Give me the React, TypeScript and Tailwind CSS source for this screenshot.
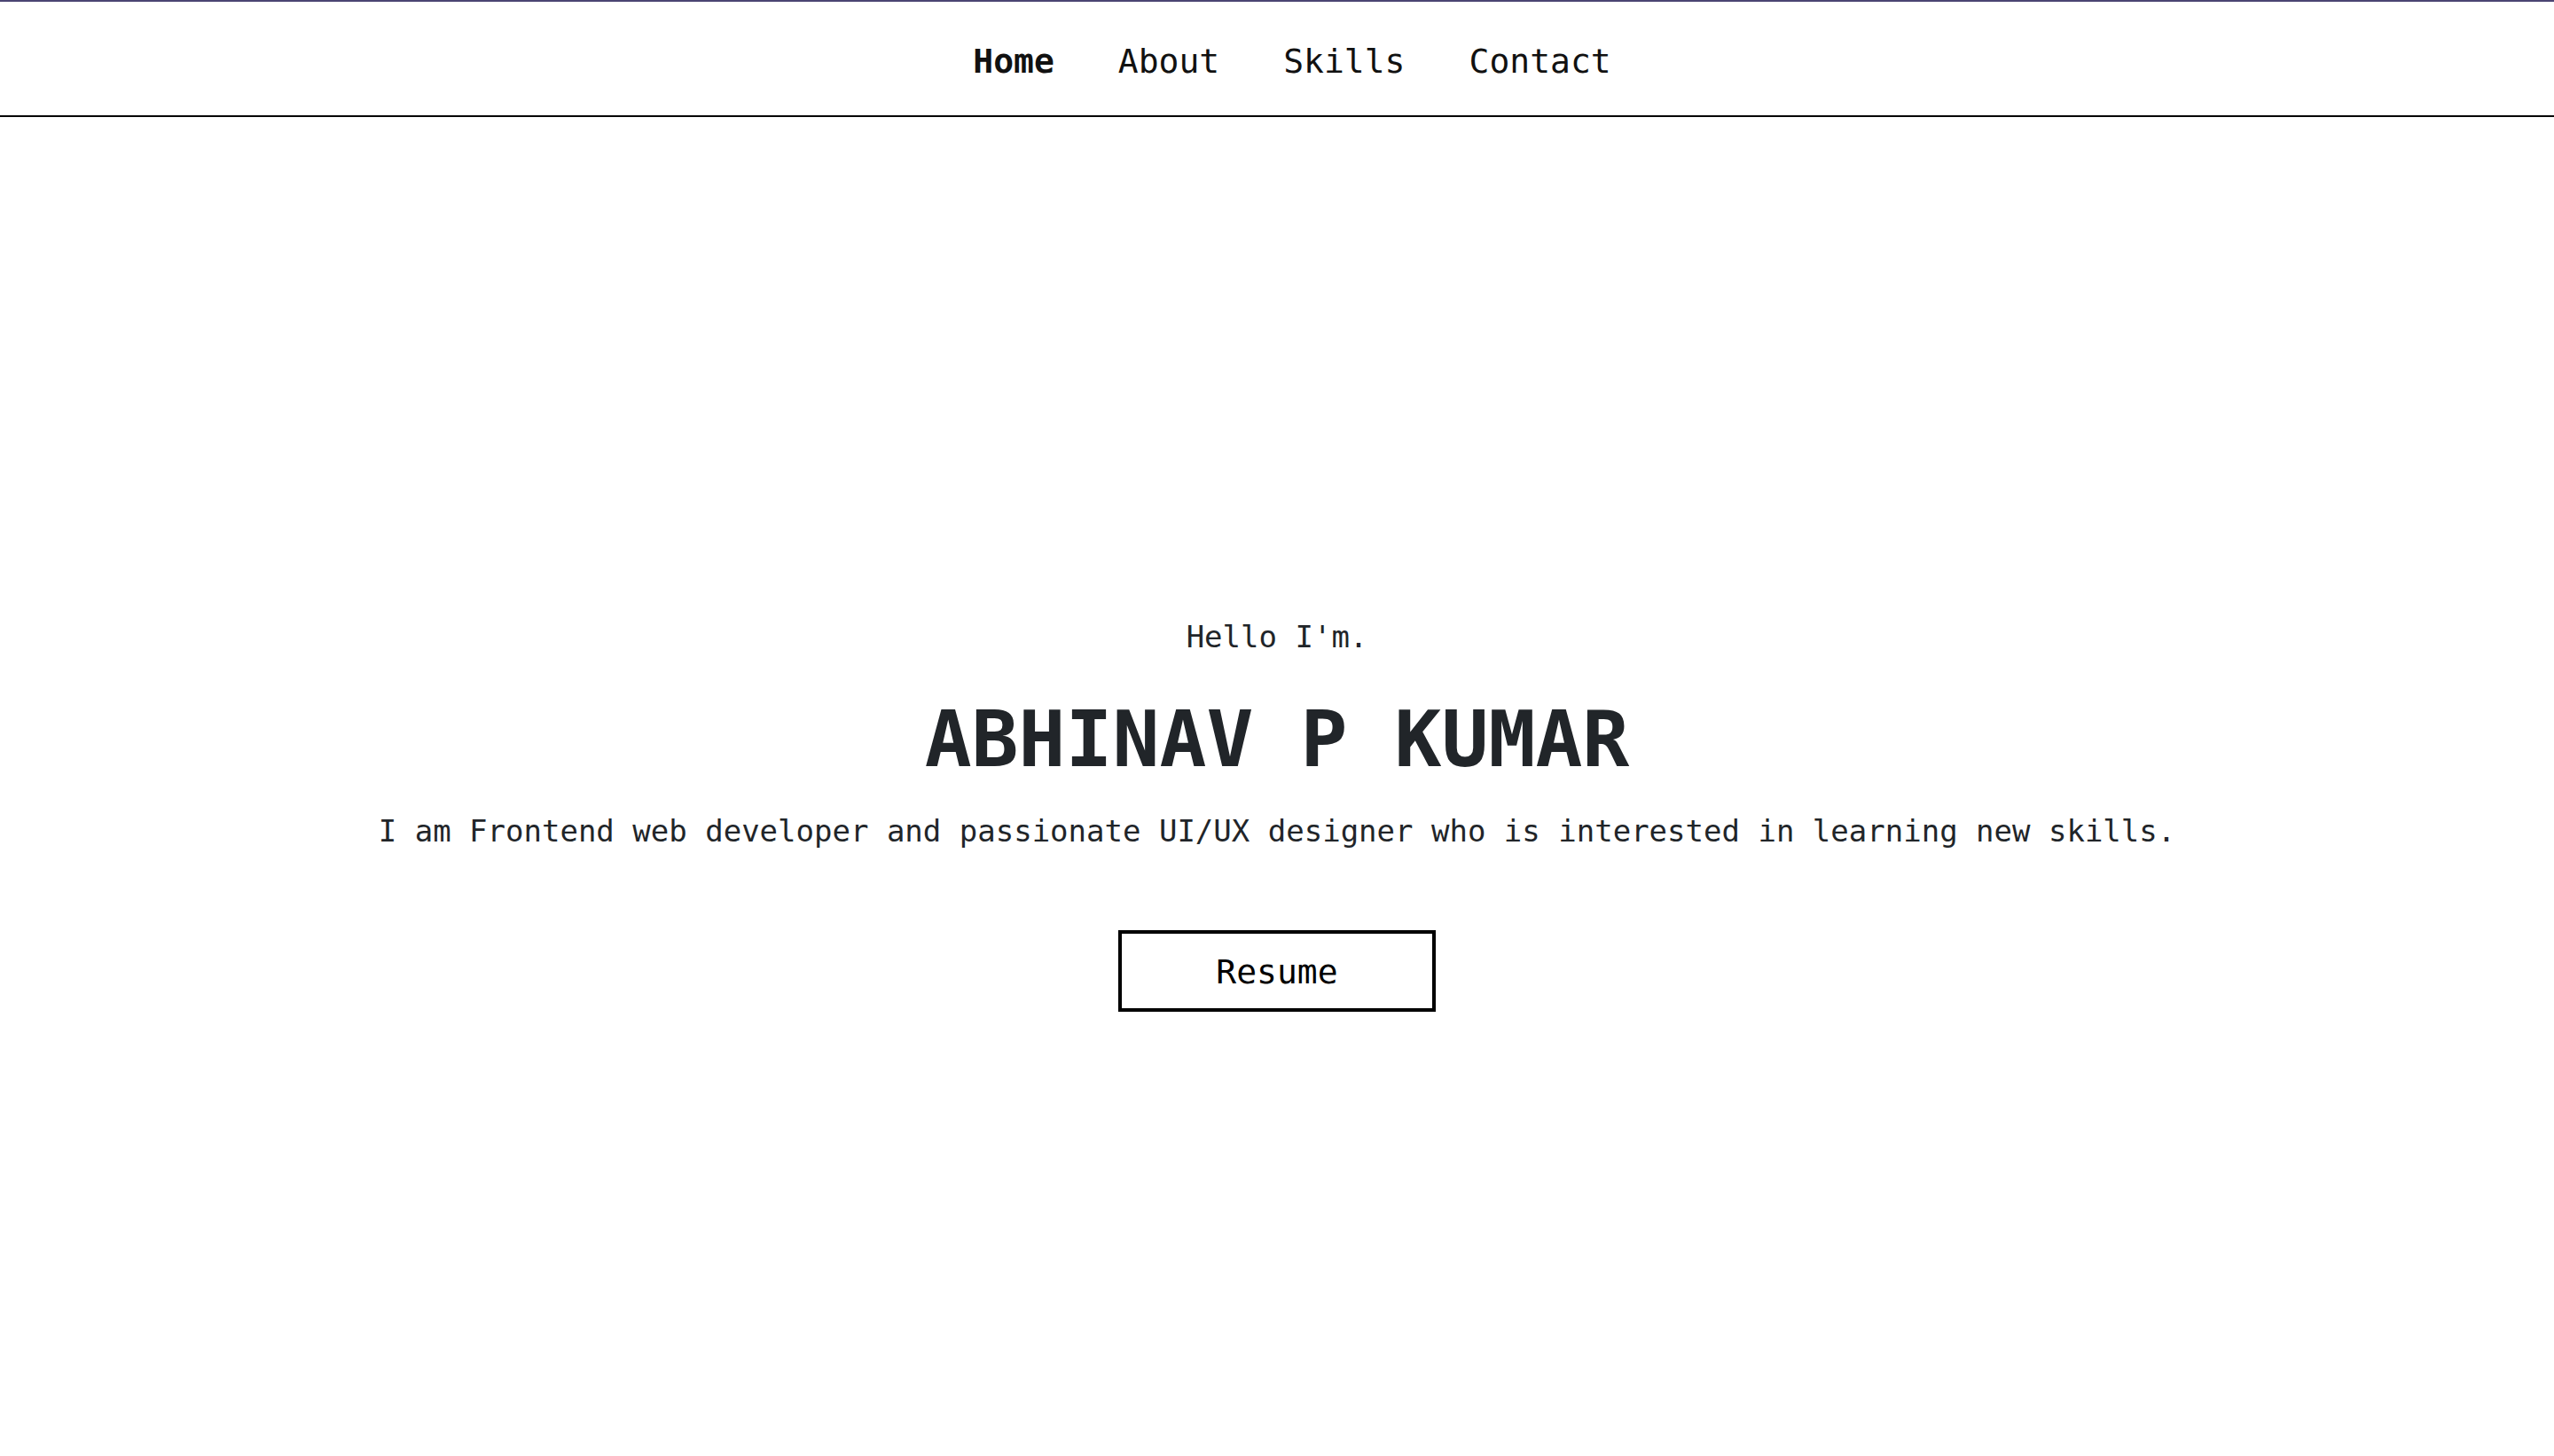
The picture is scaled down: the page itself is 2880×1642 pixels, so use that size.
const navLinks = [
  { label: "Home", active: true },
  { label: "About", active: false },
  { label: "Skills", active: false },
  { label: "Contact", active: false },
];

function Navbar() {
  return (
    <nav className="h-[130px] pt-[5px] border-b-2 border-black flex items-center justify-center">
      <ul className="flex items-center gap-[72px] pl-[34px]">
        {navLinks.map((link) => (
          <li key={link.label}>
            <a
              href="#"
              className={`text-[38px] leading-[48px] text-[#111] ${
                link.active ? "font-bold" : "font-normal"
              }`}
            >
              {link.label}
            </a>
          </li>
        ))}
      </ul>
    </nav>
  );
}

export default function App() {
  return (
    <div
      className="min-h-screen bg-white"
      style={{ fontFamily: '"DejaVu Sans Mono", "Liberation Mono", monospace' }}
    >
      <div className="h-[2px] bg-[#4b4573]" />
      <Navbar />

      <section className="flex flex-col items-center pt-[566px] pb-[400px] text-[#212529]">
        <p className="text-[34px] leading-[40px]">Hello I'm.</p>
        <h1 className="mt-[36px] text-[88px] leading-[120px] font-bold">ABHINAV P KUMAR</h1>
        <p className="mt-[21px] text-[34px] leading-[44px]">
          I am Frontend web developer and passionate UI/UX designer who is interested in learning new skills.
        </p>
        <button className="mt-[90px] w-[358px] h-[92px] border-4 border-black text-[38px] text-black flex items-center justify-center pt-[2px]">
          Resume
        </button>
      </section>
    </div>
  );
}
